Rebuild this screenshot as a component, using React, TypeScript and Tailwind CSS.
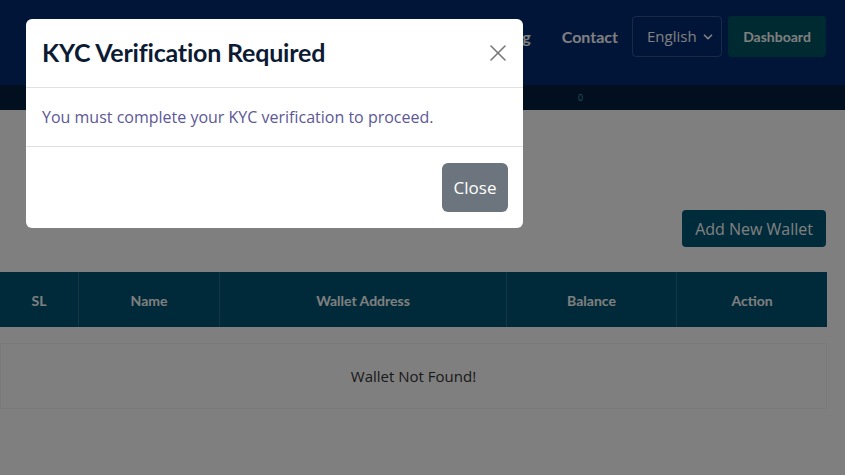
import { X, ChevronDown } from 'lucide-react'

const headFont = { fontFamily: 'Lato, "Open Sans", sans-serif' }
const bodyFont = { fontFamily: '"Open Sans", "Noto Sans", sans-serif' }

const columns = [
  { label: 'SL', w: 'w-[79px]' },
  { label: 'Name', w: 'w-[141px]' },
  { label: 'Wallet Address', w: 'w-[287px]' },
  { label: 'Balance', w: 'w-[170px]' },
  { label: 'Action', w: 'flex-1' },
]

function Navbar() {
  return (
    <div className="h-[85px] bg-[#022a72] flex items-start justify-end pt-[16px] pr-[19px]" style={headFont}>
      <nav className="h-[41px] flex items-center gap-[31px] mr-[14px] text-white text-[16px] font-bold">
        <span>Home</span>
        <span>About</span>
        <span>Blog</span>
        <span>Contact</span>
      </nav>
      <div
        className="w-[90px] h-[41px] border border-white/20 rounded-[4px] flex items-center justify-between pl-[14px] pr-[6px] text-white text-[15px]"
        style={bodyFont}
      >
        English
        <ChevronDown size={14} strokeWidth={3} />
      </div>
      <button className="ml-[6px] w-[98px] h-[41px] rounded-[4px] bg-[#005462] text-white text-[14px] font-bold">
        Dashboard
      </button>
    </div>
  )
}

function WalletTable() {
  return (
    <div className="mr-[18px]">
      <div className="flex h-[55px] bg-[#005474] text-white text-[14px] font-bold" style={headFont}>
        {columns.map((c, i) => (
          <div
            key={c.label}
            className={`${c.w} flex items-center justify-center pt-[2px] ${i < columns.length - 1 ? 'border-r border-white/15' : ''}`}
          >
            {c.label}
          </div>
        ))}
      </div>
      <div className="mt-[16px] h-[66px] border border-[#f4f4f4] flex items-center justify-center text-[15px] text-[#333]" style={bodyFont}>
        Wallet Not Found!
      </div>
    </div>
  )
}

function KycModal() {
  return (
    <div className="absolute top-[19px] left-[26px] w-[497px] bg-white rounded-[6px] z-50">
      <div className="h-[69px] flex items-center justify-between px-[16px] border-b border-[#dee2e6]">
        <h2 className="text-[25px] font-bold text-[#0c1b33] tracking-[-0.2px]" style={headFont}>
          KYC Verification Required
        </h2>
        <X size={28} strokeWidth={1.3} className="text-[#777] mr-[-5px]" />
      </div>
      <div className="h-[58px] flex items-center px-[16px] text-[16px] text-[#5c5896]" style={bodyFont}>
        You must complete your KYC verification to proceed.
      </div>
      <div className="h-[82px] flex items-start justify-end pt-[16px] px-[15px] border-t border-[#dee2e6]">
        <button className="w-[66px] h-[49px] rounded-[6px] bg-[#6c757d] text-white text-[17px]" style={bodyFont}>
          Close
        </button>
      </div>
    </div>
  )
}

export default function App() {
  return (
    <div className="relative w-[845px] h-[475px] overflow-hidden bg-white">
      <Navbar />
      <div className="h-[25px] bg-[#041e3c] flex items-center pl-[578px] text-[9px] text-[#3fb0b0]" style={bodyFont}>
        0
      </div>
      <div className="flex justify-end pr-[19px] pt-[100px] pb-[25px]">
        <button className="h-[37px] px-[13px] rounded-[4px] bg-[#005674] text-white text-[16px]" style={bodyFont}>
          Add New Wallet
        </button>
      </div>
      <WalletTable />
      <div className="absolute inset-0 bg-black/50 z-40" />
      <KycModal />
    </div>
  )
}
